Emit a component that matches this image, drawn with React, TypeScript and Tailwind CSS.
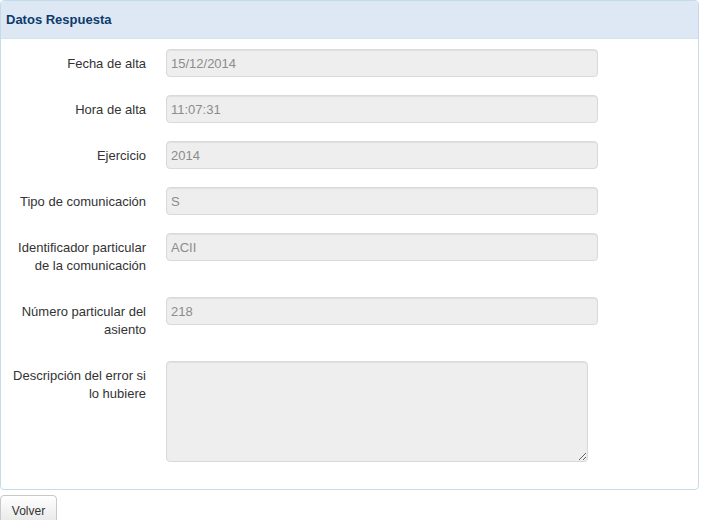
const rows: { label: string[]; value: string }[] = [
  { label: ['Fecha de alta'], value: '15/12/2014' },
  { label: ['Hora de alta'], value: '11:07:31' },
  { label: ['Ejercicio'], value: '2014' },
  { label: ['Tipo de comunicación'], value: 'S' },
  { label: ['Identificador particular', 'de la comunicación'], value: 'ACII' },
  { label: ['Número particular del', 'asiento'], value: '218' },
]

function Label({ lines }: { lines: string[] }) {
  return (
    <div className="w-[145px] shrink-0 text-right pt-[6px] pb-[4px] leading-[18px]">
      {lines.map((l) => (
        <div key={l}>{l}</div>
      ))}
    </div>
  )
}

export default function App() {
  return (
    <div className="w-[699px] font-['Liberation_Sans',Arial,sans-serif] text-[13px] text-[#333]">
      <div className="border border-[#c4dcea] rounded-[4px] bg-white">
        <div className="h-[38px] bg-[#dde8f4] border-b border-[#d3e3ef] rounded-t-[4px] pl-[5px] flex items-center font-bold text-[#0e3a6c]">
          Datos Respuesta
        </div>
        <div className="pt-[10px] pb-[9px]">
          {rows.map((r) => (
            <div key={r.value} className="flex gap-[20px] mb-[18px]">
              <Label lines={r.label} />
              <input
                readOnly
                value={r.value}
                className="w-[432px] h-[28px] shrink-0 bg-[#eeeeee] border border-[#d9d9d9] rounded-[4px] px-[4px] text-[13px] text-[#8c8c8c] shadow-[inset_0_1px_1px_rgba(0,0,0,0.06)] outline-none font-['Liberation_Sans',Arial,sans-serif]"
              />
            </div>
          ))}
          <div className="flex gap-[20px] mb-[18px]">
            <Label lines={['Descripción del error si', 'lo hubiere']} />
            <textarea
              readOnly
              className="w-[422px] h-[101px] shrink-0 bg-[#eeeeee] border border-[#d9d9d9] rounded-[4px] px-[4px] text-[13px] text-[#8c8c8c] shadow-[inset_0_1px_1px_rgba(0,0,0,0.06)] outline-none resize"
            />
          </div>
        </div>
      </div>
      <button className="mt-[5px] w-[57px] border border-[#c8c8c8] rounded-[4px] bg-gradient-to-b from-white to-[#e4e4e4] py-[7px] text-[12px] leading-[17px] text-[#333]">
        Volver
      </button>
    </div>
  )
}
